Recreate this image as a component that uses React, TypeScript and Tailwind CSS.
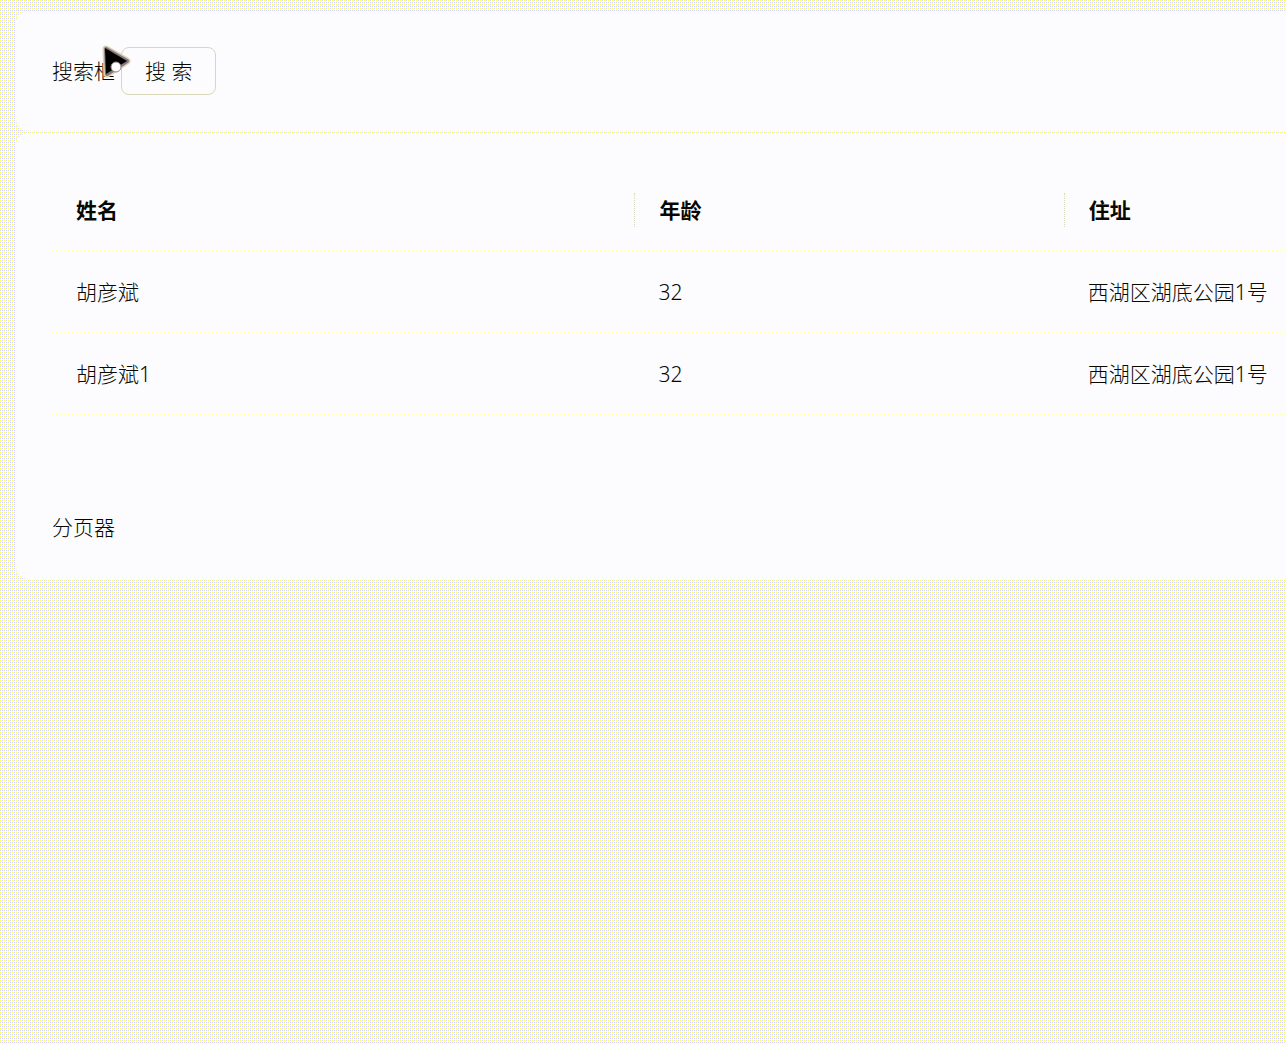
import React from "react";

const rows = [
  { name: "胡彦斌", age: 32, address: "西湖区湖底公园1号" },
  { name: "胡彦斌1", age: 32, address: "西湖区湖底公园1号" },
];

const dash =
  "bg-[repeating-linear-gradient(90deg,#ffffa8_0_1px,#fcfcff_1px_4px)] bg-[length:100%_1px] bg-bottom bg-no-repeat";

const divider = "border-l border-dotted border-[#d8d8c0]";

function Pointer() {
  return (
    <svg
      className="pointer-events-none absolute -top-3 left-12 h-9 w-9"
      viewBox="0 0 36 36"
      aria-hidden="true"
    >
      <path
        d="M6 6 L27 18 L7 31 Z"
        fill="#000"
        stroke="#d8d0b4"
        strokeWidth="7"
        strokeLinejoin="round"
      />
      <path d="M6 6 L27 18 L7 31 Z" fill="#000" stroke="#85757c" strokeWidth="4" strokeLinejoin="round" />
      <path d="M5 5 L27 18 L6 31 Z" fill="#000" />
      <circle cx="16" cy="24" r="5" fill="#fff" stroke="#8f8088" strokeWidth="1" />
    </svg>
  );
}

export default function App() {
  return (
    <main className="min-h-screen overflow-hidden bg-[#fcfcff] bg-[conic-gradient(from_0deg_at_1px_1px,transparent_75%,#ffff55_75%),conic-gradient(from_0deg_at_1px_1px,transparent_75%,#d4d4f4_75%)] bg-[length:4px_4px,2px_2px] pt-[11px] pl-4 font-['Noto_Sans','Noto_Sans_CJK_SC',sans-serif] text-[21px] leading-8 font-light text-[#080800]">
      <section className="flex items-center gap-1.5 rounded-l-xl bg-[#fcfcff] px-9 py-9">
        <label htmlFor="search" className="relative">
          搜索框
          <Pointer />
        </label>
        <button
          id="search"
          type="button"
          className="h-12 rounded-lg border border-[#d8d8b8] px-[23px]"
        >
          搜 索
        </button>
      </section>
      <section className="mt-0.5 rounded-l-xl bg-[#fcfcff] pt-9 pb-9 pl-9">
        <table className="w-full table-fixed border-collapse text-left">
          <thead>
            <tr className={dash}>
              <th className="h-[82px] w-[47.2%] pl-6 font-bold">姓名</th>
              <th className="w-[34.8%] font-bold">
                <div className={`flex h-[34px] items-center pl-6 ${divider}`}>年龄</div>
              </th>
              <th className="font-bold">
                <div className={`flex h-[34px] items-center pl-6 ${divider}`}>住址</div>
              </th>
            </tr>
          </thead>
          <tbody>
            {rows.map((r) => (
              <tr key={r.name} className={dash}>
                <td className="h-[82px] pl-6">{r.name}</td>
                <td className="pl-6">{r.age}</td>
                <td className="pl-6 whitespace-nowrap">{r.address}</td>
              </tr>
            ))}
          </tbody>
        </table>
        <p className="mt-24">分页器</p>
      </section>
    </main>
  );
}
